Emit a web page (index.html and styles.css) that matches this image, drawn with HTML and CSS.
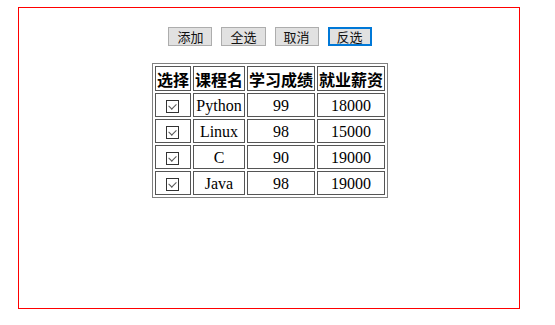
FILE: index.html
```html
<!DOCTYPE html>
<html lang="zh-CN">
<head>
  <meta charset="UTF-8">
  <meta name="viewport" content="width=device-width, initial-scale=1.0">
  <title>课程列表</title>
  <link rel="stylesheet" href="styles.css">
</head>
<body>
  <div class="box">
    <div class="controls">
      <button>添加</button>
      <button>全选</button>
      <button>取消</button>
      <button class="active">反选</button>
    </div>
    <table class="list">
      <tr>
        <th>选择</th>
        <th>课程名</th>
        <th>学习成绩</th>
        <th>就业薪资</th>
      </tr>
      <tr>
        <td><input type="checkbox" checked></td>
        <td>Python</td>
        <td>99</td>
        <td>18000</td>
      </tr>
      <tr>
        <td><input type="checkbox" checked></td>
        <td>Linux</td>
        <td>98</td>
        <td>15000</td>
      </tr>
      <tr>
        <td><input type="checkbox" checked></td>
        <td>C</td>
        <td>90</td>
        <td>19000</td>
      </tr>
      <tr>
        <td><input type="checkbox" checked></td>
        <td>Java</td>
        <td>98</td>
        <td>19000</td>
      </tr>
    </table>
  </div>
</body>
</html>
```
FILE: styles.css
```css
body {
  margin: 7px 0 0 18px;
  font-family: "Liberation Serif", "Noto Sans CJK SC", serif;
  font-size: 16px;
  color: #000;
  background: #fff;
}
.box {
  width: 498px;
  height: 300px;
  padding-left: 2px;
  border: 1px solid red;
}
.controls {
  display: flex;
  justify-content: center;
  gap: 9px;
  padding-top: 19px;
}
.controls button {
  font-family: "Noto Sans CJK SC", sans-serif;
  font-size: 13px;
  line-height: 15px;
  height: 19px;
  padding: 0 8px;
  background: #e1e1e1;
  color: #111;
  border: 1px solid #adadad;
  margin: 0;
}
.controls button.active {
  border: 2px solid #0078d7;
  padding: 0 7px;
}
.list {
  margin: 17px auto 0;
  border: 1px solid #808080;
  border-spacing: 2px;
  border-collapse: separate;
}
.list th,
.list td {
  border: 1px solid #555;
  padding: 1px;
  text-align: center;
  line-height: 20px;
  white-space: nowrap;
}
.list th {
  font-family: "Noto Sans CJK SC", sans-serif;
  font-weight: bold;
  padding: 2px 1px 1px;
}
.list td {
  line-height: 19px;
  padding: 2px 1px 1px;
}
.list input {
  appearance: none;
  width: 13px;
  height: 13px;
  margin: 4px 0 0;
  border: 1px solid #333;
  background: #fff;
  position: relative;
  vertical-align: top;
}
.list input:checked::after {
  content: "";
  position: absolute;
  left: 3px;
  top: 1px;
  width: 4px;
  height: 6px;
  border: solid #555;
  border-width: 0 1px 1px 0;
  transform: rotate(45deg);
}
```
